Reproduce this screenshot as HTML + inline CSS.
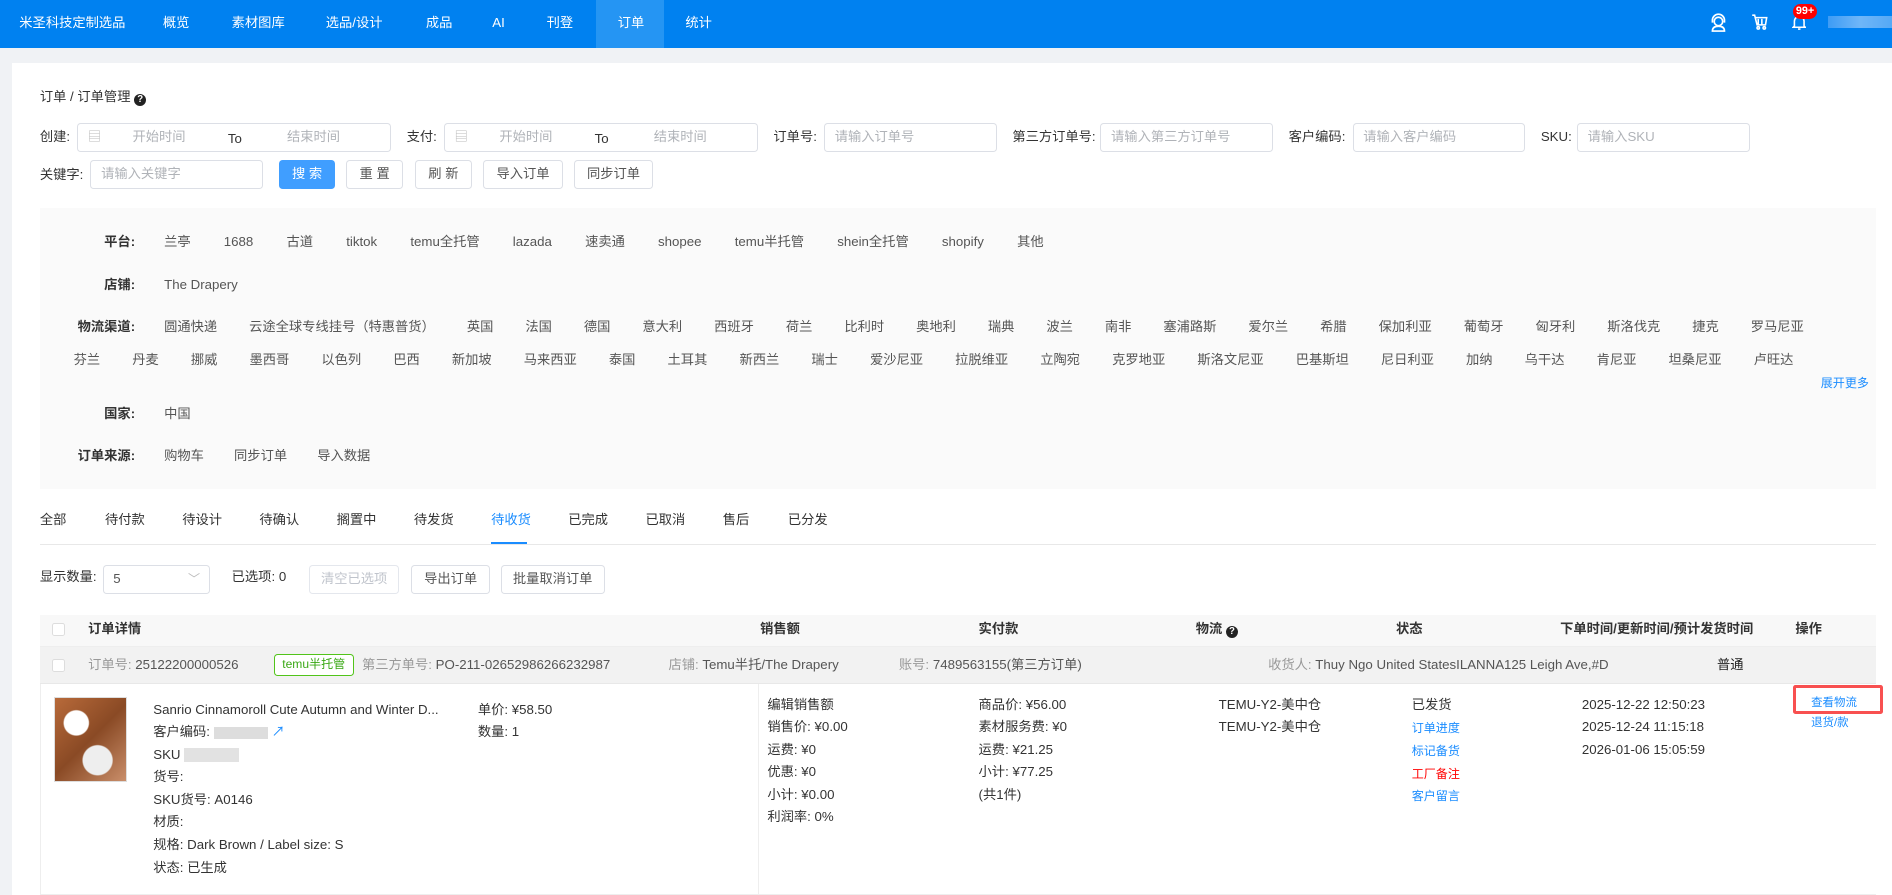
<!DOCTYPE html>
<html><head><meta charset="utf-8"><style>
*{box-sizing:border-box;margin:0;padding:0}
html,body{width:1892px;height:895px;overflow:hidden;background:#f0f2f5}
#w{zoom:1.2066;width:1568px;height:742px;position:relative;font-family:"Liberation Sans","Noto Sans CJK SC",sans-serif;font-size:11px;line-height:16px;color:#333}
.a{position:absolute;white-space:nowrap}
.nav{position:absolute;left:0;top:0;width:1568px;height:40px;background:#0081f0}
.nav span{position:absolute;top:0;line-height:38px;color:#fff;font-size:11px}
.inp{position:absolute;height:24px;border:1px solid #dcdfe6;border-radius:3px;background:#fff;color:#b0b3b8;font-size:11px;line-height:22px;padding-left:8px}
.inp span{line-height:22px}
.btn{position:absolute;height:24px;border:1px solid #dcdfe6;border-radius:3px;background:#fff;color:#555;font-size:11px;line-height:22px;text-align:center}
.row{position:absolute;left:136px;display:flex;align-items:baseline;gap:27.5px;color:#555;white-space:nowrap}
.lbl{position:absolute;width:96px;left:16px;text-align:right;font-weight:bold;color:#333}
.blue{color:#1a8cff}
.cb{position:absolute;width:11px;height:11px;border:1px solid #ddd;background:#fff;border-radius:2px}
</style></head><body><div id="w">
<div class="nav">
<span style="left:16px">米圣科技定制选品</span>
<span style="left:135px">概览</span><span style="left:192px">素材图库</span><span style="left:270px">选品/设计</span><span style="left:353px">成品</span><span style="left:408px">AI</span><span style="left:453px">刊登</span>
<div style="position:absolute;left:494px;top:0;width:56px;height:40px;background:#2595f3"></div>
<span style="left:512px">订单</span><span style="left:568px">统计</span>
<svg class="a" style="left:1417px;top:11px" width="14" height="16" viewBox="0 0 14 16" fill="none" stroke="#fff" stroke-width="1.4"><circle cx="7" cy="7" r="3.5"/><path d="M2 8V6a5 5 0 0110 0v2M2 15c0-3 2-4 5-4s5 1 5 4z"/></svg>
<svg class="a" style="left:1451px;top:12px" width="14" height="13" viewBox="0 0 14 13" fill="none" stroke="#fff" stroke-width="1.3"><path d="M1 1h2l2 8h7l1-6H4M6 4v5M9 4v5"/><circle cx="6" cy="11.5" r="1"/><circle cx="11" cy="11.5" r="1"/></svg>
<svg class="a" style="left:1485px;top:12px" width="12" height="14" viewBox="0 0 12 14" fill="none" stroke="#fff" stroke-width="1.3"><path d="M2 10V6a4 4 0 018 0v4l1 1H1zM5 12.5h2"/></svg>
<div class="a" style="left:1486px;top:3px;width:20px;height:13px;background:#f00;border-radius:7px;color:#fff;font-size:9px;font-weight:bold;text-align:center;line-height:13px">99+</div>
<div class="a" style="left:1515px;top:13px;width:53px;height:10px;background:linear-gradient(90deg,#3d9cf5,#6fb6f8,#55a9f6)"></div>
</div>
<div class="a" style="left:10px;top:52px;width:1558px;height:690px;background:#fff"></div>
<div class="a" style="left:33px;top:72px;color:#333">订单 / 订单管理 <span style="display:inline-block;width:10px;height:10px;border-radius:50%;background:#222;color:#fff;font-size:8px;text-align:center;line-height:10px;font-weight:bold;vertical-align:-1px">?</span></div>
<div class="a" style="left:33px;top:105px">创建:</div>
<div class="inp" style="left:64px;top:102px;width:260px"><span style="color:#bbb">▤</span><span class="a" style="left:45px">开始时间</span><span class="a" style="left:124px;color:#333;top:2px">To</span><span class="a" style="left:173px">结束时间</span></div>
<div class="a" style="left:337px;top:105px">支付:</div>
<div class="inp" style="left:368px;top:102px;width:260px"><span style="color:#bbb">▤</span><span class="a" style="left:45px">开始时间</span><span class="a" style="left:124px;color:#333;top:2px">To</span><span class="a" style="left:173px">结束时间</span></div>
<div class="a" style="left:641px;top:105px">订单号:</div><div class="inp" style="left:683px;top:102px;width:143px">请输入订单号</div>
<div class="a" style="left:839px;top:105px">第三方订单号:</div><div class="inp" style="left:912px;top:102px;width:143px">请输入第三方订单号</div>
<div class="a" style="left:1068px;top:105px">客户编码:</div><div class="inp" style="left:1121px;top:102px;width:143px">请输入客户编码</div>
<div class="a" style="left:1277px;top:105px">SKU:</div><div class="inp" style="left:1307px;top:102px;width:143px">请输入SKU</div>
<div class="a" style="left:33px;top:137px">关键字:</div><div class="inp" style="left:75px;top:133px;width:143px">请输入关键字</div>
<div class="btn" style="left:231px;top:133px;width:47px;background:#409eff;border-color:#409eff;color:#fff">搜 索</div>
<div class="btn" style="left:287px;top:133px;width:47px">重 置</div>
<div class="btn" style="left:344px;top:133px;width:47px">刷 新</div>
<div class="btn" style="left:400px;top:133px;width:67px">导入订单</div>
<div class="btn" style="left:476px;top:133px;width:65px">同步订单</div>
<div class="a" style="left:33px;top:172px;width:1522px;height:233px;background:#fafafa"></div>
<div class="lbl" style="top:192px">平台:</div>
<div class="row" style="top:192px"><span>兰亭</span><span>1688</span><span>古道</span><span>tiktok</span><span>temu全托管</span><span>lazada</span><span>速卖通</span><span>shopee</span><span>temu半托管</span><span>shein全托管</span><span>shopify</span><span>其他</span></div>
<div class="lbl" style="top:228px">店铺:</div><div class="row" style="top:228px"><span>The Drapery</span></div>
<div class="lbl" style="top:263px">物流渠道:</div>
<div class="row" style="top:263px;gap:26.5px"><span>圆通快递</span><span>云途全球专线挂号（特惠普货）</span><span>英国</span><span>法国</span><span>德国</span><span>意大利</span><span>西班牙</span><span>荷兰</span><span>比利时</span><span>奥地利</span><span>瑞典</span><span>波兰</span><span>南非</span><span>塞浦路斯</span><span>爱尔兰</span><span>希腊</span><span>保加利亚</span><span>葡萄牙</span><span>匈牙利</span><span>斯洛伐克</span><span>捷克</span><span>罗马尼亚</span></div>
<div class="row" style="top:290px;left:61px;gap:26.6px"><span>芬兰</span><span>丹麦</span><span>挪威</span><span>墨西哥</span><span>以色列</span><span>巴西</span><span>新加坡</span><span>马来西亚</span><span>泰国</span><span>土耳其</span><span>新西兰</span><span>瑞士</span><span>爱沙尼亚</span><span>拉脱维亚</span><span>立陶宛</span><span>克罗地亚</span><span>斯洛文尼亚</span><span>巴基斯坦</span><span>尼日利亚</span><span>加纳</span><span>乌干达</span><span>肯尼亚</span><span>坦桑尼亚</span><span>卢旺达</span></div>
<div class="a blue" style="left:1509px;top:310px;font-size:10px">展开更多</div>
<div class="lbl" style="top:335px">国家:</div><div class="row" style="top:335px"><span>中国</span></div>
<div class="lbl" style="top:370px">订单来源:</div><div class="row" style="top:370px;gap:25px"><span>购物车</span><span>同步订单</span><span>导入数据</span></div>
<div class="row" style="top:423px;left:33px;gap:0;color:#333">
<span style="width:54px">全部</span><span style="width:64px">待付款</span><span style="width:64px">待设计</span><span style="width:64px">待确认</span><span style="width:64px">搁置中</span><span style="width:64px">待发货</span><span style="width:64px;color:#1a8cff">待收货</span><span style="width:64px">已完成</span><span style="width:64px">已取消</span><span style="width:54px">售后</span><span>已分发</span></div>
<div class="a" style="left:33px;top:451px;width:1522px;height:1px;background:#e8e8e8"></div>
<div class="a" style="left:407px;top:449px;width:30px;height:2px;background:#1a8cff"></div>
<div class="a" style="left:33px;top:470px">显示数量:</div>
<div class="inp" style="left:85px;top:468px;width:89px;color:#555">5<span class="a" style="left:70px;top:0;color:#bbb;font-size:10px">﹀</span></div>
<div class="a" style="left:192px;top:470px">已选项: 0</div>
<div class="btn" style="left:256px;top:468px;width:75px;color:#c0c4cc;border-color:#e4e7ed">清空已选项</div>
<div class="btn" style="left:341px;top:468px;width:65px">导出订单</div>
<div class="btn" style="left:415px;top:468px;width:86px">批量取消订单</div>
<div class="a" style="left:33px;top:510px;width:1522px;height:26px;background:#f8f8f8;border-bottom:1px solid #eee"></div>
<div class="cb" style="left:43px;top:516px"></div>
<div class="a" style="left:73px;top:513px;font-weight:bold">订单详情</div>
<div class="a" style="left:630px;top:513px;font-weight:bold">销售额</div>
<div class="a" style="left:811px;top:513px;font-weight:bold">实付款</div>
<div class="a" style="left:991px;top:513px;font-weight:bold">物流 <span style="display:inline-block;width:10px;height:10px;border-radius:50%;background:#222;color:#fff;font-size:8px;text-align:center;line-height:10px;vertical-align:-1px">?</span></div>
<div class="a" style="left:1157px;top:513px;font-weight:bold">状态</div>
<div class="a" style="left:1293px;top:513px;font-weight:bold">下单时间/更新时间/预计发货时间</div>
<div class="a" style="left:1488px;top:513px;font-weight:bold">操作</div>
<div class="a" style="left:33px;top:536px;width:1522px;height:31px;background:#f2f2f2;border-bottom:1px solid #e8e8e8"></div>
<div class="cb" style="left:43px;top:546px"></div>
<div class="a" style="left:73px;top:543px;color:#999">订单号: <span style="color:#555">25122200000526</span></div>
<div class="a" style="left:227px;top:542px;width:66px;height:18px;border:1px solid #52c41a;border-radius:3px;color:#3aa815;font-size:10px;text-align:center;line-height:16px;background:#fff">temu半托管</div>
<div class="a" style="left:300px;top:543px;color:#999">第三方单号: <span style="color:#555">PO-211-02652986266232987</span></div>
<div class="a" style="left:554px;top:543px;color:#999">店铺: <span style="color:#555">Temu半托/The Drapery</span></div>
<div class="a" style="left:745px;top:543px;color:#999">账号: <span style="color:#555">7489563155(第三方订单)</span></div>
<div class="a" style="left:1051px;top:543px;color:#999">收货人: <span style="color:#555">Thuy Ngo United StatesILANNA125 Leigh Ave,#D</span></div>
<div class="a" style="left:1423px;top:543px;color:#222">普通</div>
<div class="a" style="left:33px;top:567px;width:1px;height:175px;background:#eee"></div>
<div class="a" style="left:628px;top:567px;width:1px;height:175px;background:#eee"></div>
<div class="a" style="left:45px;top:578px;width:60px;height:70px;background:radial-gradient(circle at 30% 30%,#fff 0 10px,transparent 11px),radial-gradient(circle at 60% 75%,#eee 0 12px,transparent 13px),linear-gradient(135deg,#b86a3a,#8a4a25 50%,#c98e6a);border:1px solid #ddd"></div>
<div class="a" style="left:127px;top:579px;line-height:18.7px;color:#333">Sanrio Cinnamoroll Cute Autumn and Winter D...<br>客户编码: <span style="display:inline-block;width:45px;height:10px;background:#ddd;vertical-align:middle"></span> <span class="blue">↗</span><br>SKU <span style="display:inline-block;width:45px;height:12px;background:#e2e2e2;vertical-align:middle"></span><br>货号:<br>SKU货号: A0146<br>材质:<br>规格: Dark Brown / Label size: S<br>状态: 已生成</div>
<div class="a" style="left:396px;top:579px;line-height:18.7px">单价: ¥58.50<br>数量: 1</div>
<div class="a" style="left:636px;top:575px;line-height:18.6px">编辑销售额<br>销售价: ¥0.00<br>运费: ¥0<br>优惠: ¥0<br>小计: ¥0.00<br>利润率: 0%</div>
<div class="a" style="left:811px;top:575px;line-height:18.6px">商品价: ¥56.00<br>素材服务费: ¥0<br>运费: ¥21.25<br>小计: ¥77.25<br>(共1件)</div>
<div class="a" style="left:1010px;top:575px;line-height:18.6px">TEMU-Y2-美中仓<br>TEMU-Y2-美中仓</div>
<div class="a" style="left:1170px;top:575px;line-height:19px">已发货<br><span class="blue" style="font-size:10px">订单进度</span><br><span class="blue" style="font-size:10px">标记备货</span><br><span style="color:#f00;font-size:10px">工厂备注</span><br><span class="blue" style="font-size:10px">客户留言</span></div>
<div class="a" style="left:1311px;top:575px;line-height:18.6px">2025-12-22 12:50:23<br>2025-12-24 11:15:18<br>2026-01-06 15:05:59</div>
<div class="a" style="left:1486px;top:568px;width:75px;height:24px;border:2.5px solid #f85050;border-radius:2px"></div>
<div class="a blue" style="left:1501px;top:574px;line-height:17px;font-size:9.5px">查看物流<br>退货/款</div>
<div class="a" style="left:33px;top:741px;width:1522px;height:1px;background:#eee"></div>
</div></body></html>
